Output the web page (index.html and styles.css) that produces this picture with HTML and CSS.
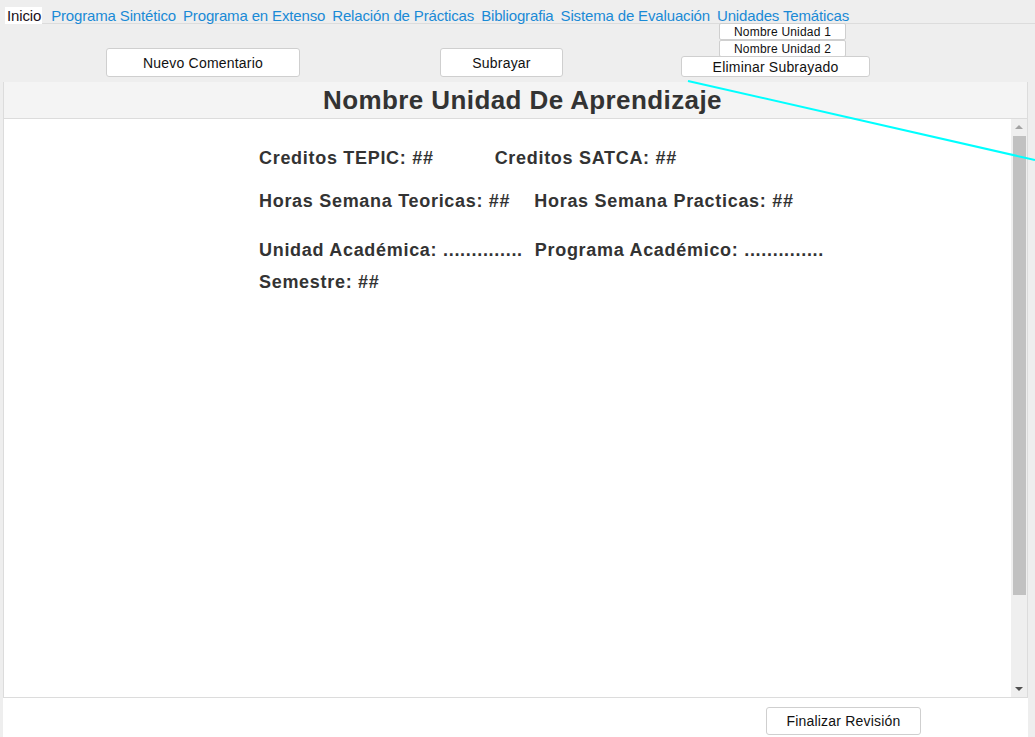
FILE: index.html
```html
<!DOCTYPE html>
<html lang="es">
<head>
<meta charset="utf-8">
<title>Revisión</title>
<link rel="stylesheet" href="styles.css">
</head>
<body>
<nav class="tabs">
  <a class="tab active">Inicio</a>
  <a class="tab">Programa Sintético</a>
  <a class="tab">Programa en Extenso</a>
  <a class="tab">Relación de Prácticas</a>
  <a class="tab">Bibliografia</a>
  <a class="tab">Sistema de Evaluación</a>
  <a class="tab">Unidades Temáticas</a>
</nav>
<div class="toolbar">
  <button class="btn btn-comment">Nuevo Comentario</button>
  <button class="btn btn-underline">Subrayar</button>
  <div class="unit-group">
    <button class="btn btn-small">Nombre Unidad 1</button>
    <button class="btn btn-small">Nombre Unidad 2</button>
    <button class="btn btn-remove">Eliminar Subrayado</button>
  </div>
</div>
<main class="panel">
  <header class="panel-header">
    <h1 class="title">Nombre Unidad De Aprendizaje</h1>
  </header>
  <section class="panel-body">
    <div class="content">
      <div class="row row-1">
        <span class="field">Creditos TEPIC: ##</span>
        <span class="field f-satca">Creditos SATCA: ##</span>
      </div>
      <div class="row row-2">
        <span class="field">Horas Semana Teoricas: ##</span>
        <span class="field f-gap">Horas Semana Practicas: ##</span>
      </div>
      <div class="row row-3">
        <span class="field">Unidad Académica: ..............</span>
        <span class="field f-gap2">Programa Académico: ..............</span>
      </div>
      <div class="row row-4">
        <span class="field">Semestre: ##</span>
      </div>
    </div>
    <div class="scrollbar">
      <div class="arrow arrow-up"></div>
      <div class="thumb"></div>
      <div class="track-rest"></div>
      <div class="arrow arrow-down"></div>
    </div>
  </section>
  <footer class="panel-footer">
    <button class="btn btn-finish">Finalizar Revisión</button>
  </footer>
</main>
<svg class="underline-line" width="1035" height="200" viewBox="0 0 1035 200">
  <line x1="688" y1="81" x2="1035" y2="160" stroke="#00ffff" stroke-width="2"/>
</svg>
</body>
</html>
```
FILE: styles.css
```css
* { box-sizing: border-box; }
html, body { margin: 0; padding: 0; }
body {
  background: #eeeeee;
  font-family: "Liberation Sans", Arial, sans-serif;
  width: 1035px;
  height: 737px;
  overflow: hidden;
  position: relative;
}
.tabs {
  display: flex;
  align-items: flex-end;
  height: 24px;
  margin-left: 5px;
  border-bottom: 1px solid #dcdcdc;
}
.tab {
  font-size: 15px;
  line-height: 17px;
  letter-spacing: -0.15px;
  color: #1a8ad6;
  padding: 0;
  margin-right: 7px;
  margin-bottom: -1px;
  cursor: pointer;
  white-space: nowrap;
}
.tab.active {
  background: #ffffff;
  color: #1a1020;
  padding: 0 1px 0 2px;
  margin-right: 9px;
}
.toolbar {
  display: flex;
  align-items: flex-end;
  height: 58px;
  padding-bottom: 5px;
}
.btn {
  background: #ffffff;
  border: 1px solid #cfcfcf;
  border-radius: 3px;
  font-family: "Liberation Sans", Arial, sans-serif;
  color: #111;
  font-size: 14px;
  letter-spacing: 0.2px;
  padding: 0;
  cursor: pointer;
}
.btn-comment {
  width: 194px;
  height: 29px;
  margin-left: 106px;
}
.btn-underline {
  width: 123px;
  height: 29px;
  margin-left: 140px;
}
.unit-group {
  display: flex;
  flex-direction: column;
  align-items: flex-start;
  margin-left: 118px;
  width: 189px;
}
.btn-small {
  width: 127px;
  height: 17px;
  margin-left: 38px;
  font-size: 12px;
  line-height: 14px;
  border-radius: 2px;
}
.btn-remove {
  width: 189px;
  height: 21px;
  margin-top: -1px;
  line-height: 18px;
}
.panel {
  margin-left: 3px;
  width: 1025px;
  display: flex;
  flex-direction: column;
  height: 655px;
}
.panel-header {
  background: #f4f4f4;
  border-left: 1px solid #dcdcdc;
  border-right: 1px solid #dcdcdc;
  border-bottom: 1px solid #dcdcdc;
  height: 37px;
  display: flex;
  align-items: center;
  justify-content: center;
  padding-left: 14px;
}
.title {
  margin: 0;
  font-size: 26px;
  font-weight: bold;
  letter-spacing: 0.4px;
  color: #333333;
  line-height: 30px;
}
.panel-body {
  background: #ffffff;
  border-left: 1px solid #dcdcdc;
  border-right: 1px solid #dcdcdc;
  height: 579px;
  display: flex;
}
.content {
  flex: 1;
  padding-top: 28px;
  padding-left: 255px;
}
.row {
  display: flex;
  font-size: 18px;
  font-weight: bold;
  letter-spacing: 0.7px;
  color: #333333;
  line-height: 22px;
  white-space: nowrap;
}
.row-2 { margin-top: 21px; }
.row-3 { margin-top: 27px; }
.row-4 { margin-top: 10px; }
.f-satca { margin-left: 61px; }
.f-gap { margin-left: 24px; }
.f-gap2 { margin-left: 12px; }
.scrollbar {
  width: 16px;
  background: #efefef;
  display: flex;
  flex-direction: column;
  align-items: center;
}
.arrow {
  height: 17px;
  width: 16px;
  display: flex;
  align-items: center;
  justify-content: center;
}
.arrow-up::before {
  content: "";
  border-left: 4px solid transparent;
  border-right: 4px solid transparent;
  border-bottom: 4px solid #a3a3a3;
}
.arrow-down::before {
  content: "";
  border-left: 4px solid transparent;
  border-right: 4px solid transparent;
  border-top: 4px solid #505050;
}
.thumb {
  width: 13px;
  height: 459px;
  background: #c1c1c1;
}
.track-rest { flex: 1; }
.panel-footer {
  background: #ffffff;
  border-top: 1px solid #dcdcdc;
  height: 40px;
  display: flex;
  justify-content: flex-end;
  align-items: flex-start;
  padding-top: 9px;
  padding-right: 107px;
}
.btn-finish {
  width: 155px;
  height: 28px;
}
.underline-line {
  position: absolute;
  left: 0;
  top: 0;
  pointer-events: none;
}
```
